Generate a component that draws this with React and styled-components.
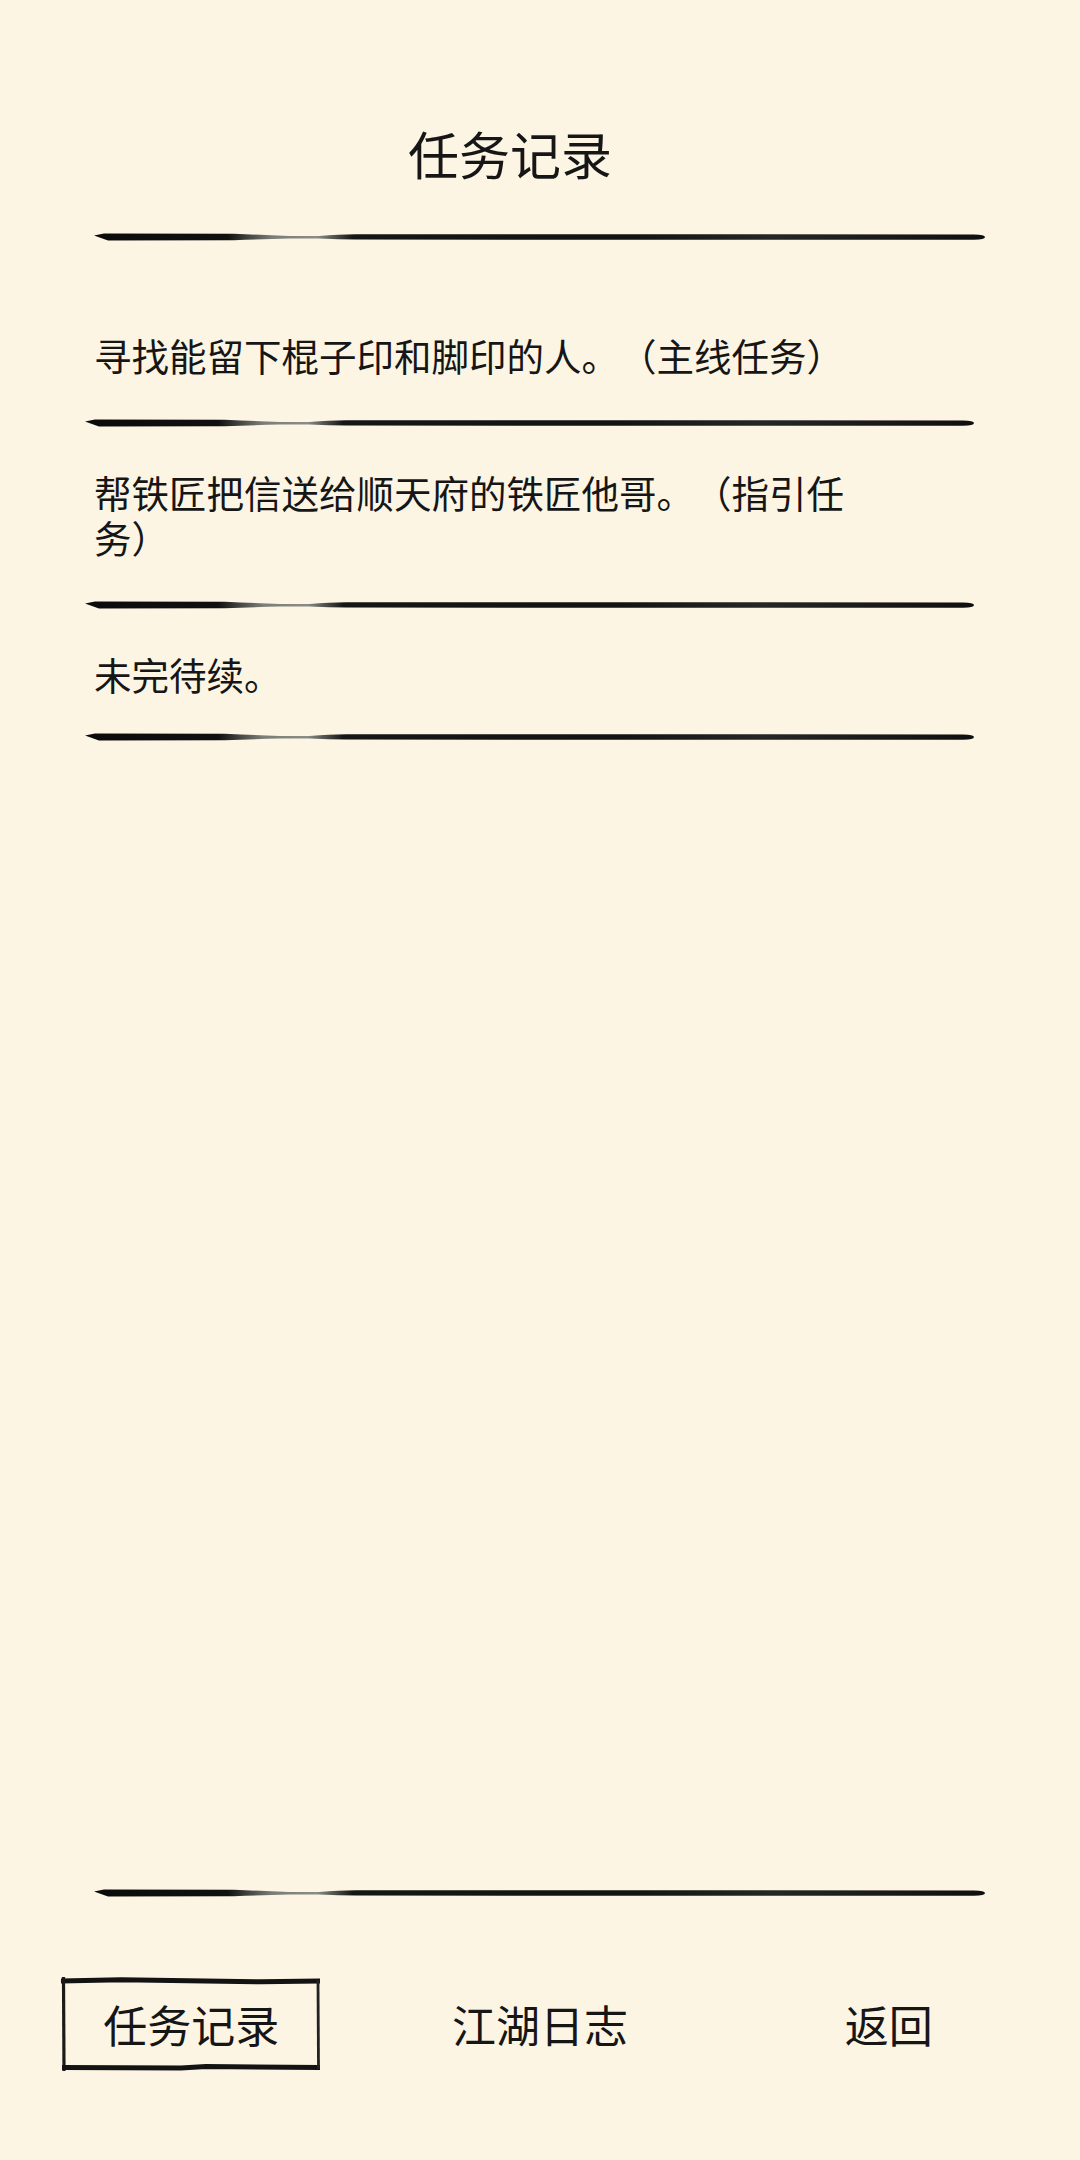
import React from 'react';
import styled, {createGlobalStyle} from 'styled-components';

const GlobalStyle = createGlobalStyle`
  html, body {
    margin: 0;
    padding: 0;
    background: #fdf5e4;
  }
  body {
    font-family: "Noto Sans CJK SC", "Noto Sans", sans-serif;
    color: #161616;
    text-spacing-trim: space-all;
  }
`;

const Page = styled.div`
  min-height: 2160px;
  display: flex;
  flex-direction: column;
  background: #fdf5e4;
`;

const Header = styled.header`
  padding: 117px 94px 0;
`;

const Title = styled.h1`
  margin: 0 60px 42px 0;
  font-size: 51px;
  line-height: 72px;
  font-weight: 400;
  text-align: center;
`;

const List = styled.ul`
  flex: 1;
  list-style: none;
  margin: 0;
  padding: 49px 105px 0 85px;
`;

const Item = styled.li`
  display: flex;
  flex-direction: column;
`;

const ItemText = styled.p`
  margin: 0;
  padding: 40px 0 ${props => props.last ? 35 : 40}px 9px;
  max-width: 770px;
  font-size: 37.5px;
  line-height: 45px;
`;

const Footer = styled.footer`
  padding: 0 94px 0;
`;

const Tabs = styled.nav`
  display: grid;
  grid-template-columns: repeat(3, 1fr);
  margin: 77px -77px 0;
  height: 184px;
  align-items: start;
`;

const Tab = styled.button`
  position: relative;
  justify-self: center;
  width: 260px;
  height: 96px;
  padding: 0;
  border: none;
  background: none;
  font-family: inherit;
  font-size: 44px;
  color: #161616;
  cursor: pointer;
`;

const Frame = styled.svg`
  position: absolute;
  inset: 0;
  width: 100%;
  height: 100%;
  pointer-events: none;
`;

const LineSvg = styled.svg`
  display: block;
  width: 100%;
  height: 12px;
`;

let gradCount = 0;

const BrushLine = () => {
    const id = `brush${gradCount++}`;
    return (
        <LineSvg viewBox="0 0 892 12" preserveAspectRatio="none" aria-hidden="true">
            <defs>
                <linearGradient id={id} x1="0" x2="1" y1="0" y2="0">
                    <stop offset="0" stopColor="#0b0b0b"/>
                    <stop offset="0.15" stopColor="#101010"/>
                    <stop offset="0.2" stopColor="#7d7d78"/>
                    <stop offset="0.25" stopColor="#8c8c86"/>
                    <stop offset="0.29" stopColor="#161616"/>
                    <stop offset="0.6" stopColor="#131313"/>
                    <stop offset="0.76" stopColor="#262626"/>
                    <stop offset="1" stopColor="#0f0f0f"/>
                </linearGradient>
            </defs>
            <path
                fill={`url(#${id})`}
                d="M0 4.6 L10 2.6 L140 2.8 Q170 4 195 5 L225 5 Q245 3.2 262 3.2 L880 3.4
                   Q891 3.4 891 6.1 Q891 8.8 880 8.8 L262 8.6 Q245 8.4 225 7.6 L195 7.6 Q170 8.2 140 9.2
                   L14 9.4 Z"
            />
        </LineSvg>
    );
};

const BoxFrame = () => (
    <Frame viewBox="0 0 260 96" preserveAspectRatio="none" aria-hidden="true">
        <path d="M0 5 L60 3.8 L200 5.8 L259 5" stroke="#131313" strokeWidth="5" fill="none"/>
        <path d="M2.5 1 L3 95" stroke="#1a1a1a" strokeWidth="3.2" fill="none"/>
        <path d="M1 91.5 L120 92 L145 90.5 L259 91.5" stroke="#131313" strokeWidth="5" fill="none"/>
        <path d="M257 4 L257.5 93" stroke="#222" strokeWidth="2.8" fill="none"/>
    </Frame>
);

const quests = [
    '寻找能留下棍子印和脚印的人。（主线任务）',
    '帮铁匠把信送给顺天府的铁匠他哥。（指引任务）',
    '未完待续。',
];

const tabs = [
    {label: '任务记录', active: true},
    {label: '江湖日志'},
    {label: '返回'},
];

const App = () => {
    return (
        <Page>
            <GlobalStyle/>
            <Header>
                <Title>任务记录</Title>
                <BrushLine/>
            </Header>
            <List>
                {quests.map((q, i) => (
                    <Item key={i}>
                        <ItemText last={i === quests.length - 1}>{q}</ItemText>
                        <BrushLine/>
                    </Item>
                ))}
            </List>
            <Footer>
                <BrushLine/>
                <Tabs>
                    {tabs.map(t => (
                        <Tab key={t.label}>
                            {t.active && <BoxFrame/>}
                            {t.label}
                        </Tab>
                    ))}
                </Tabs>
            </Footer>
        </Page>
    );
};

export default App;
